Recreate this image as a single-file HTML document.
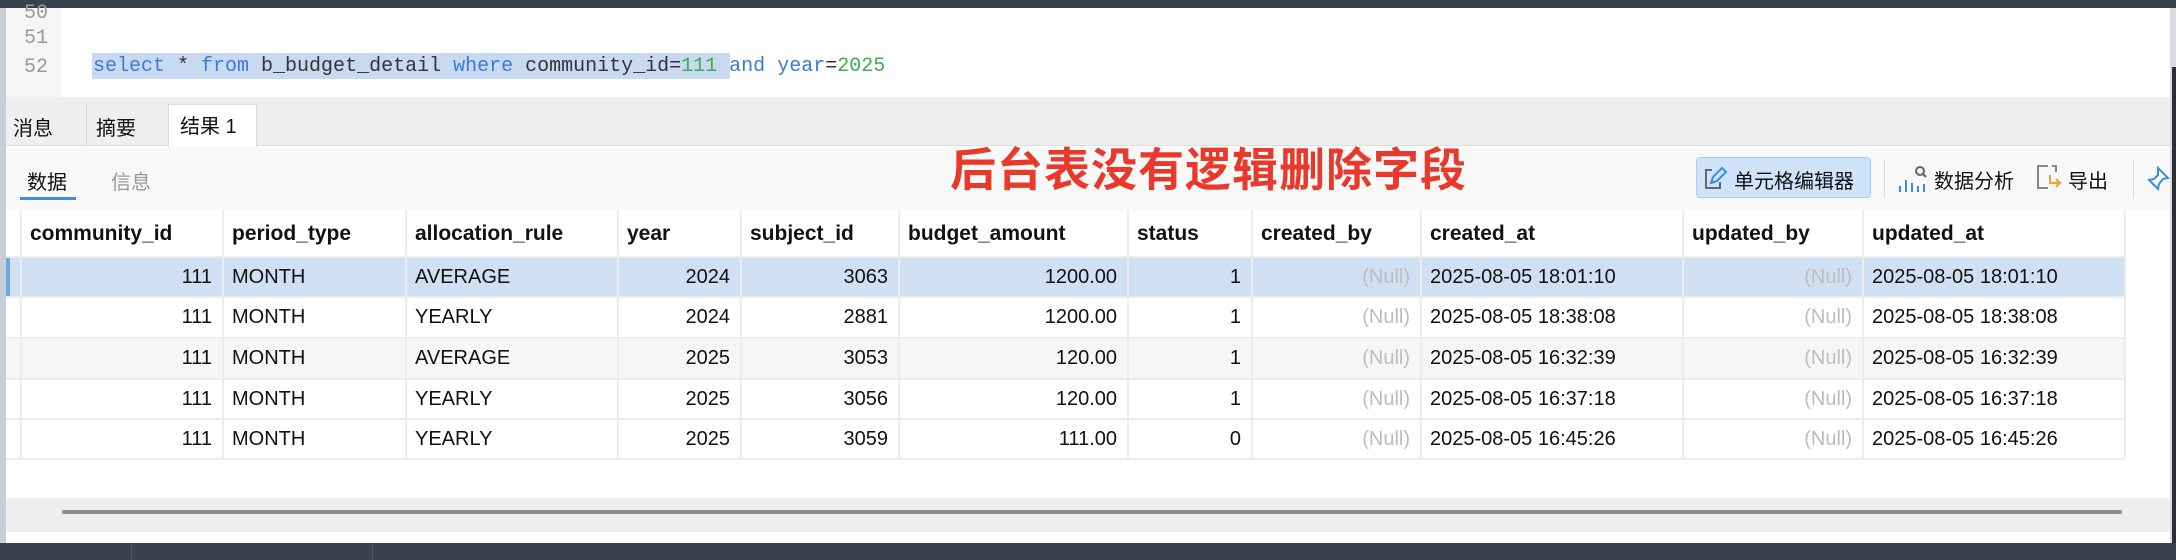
<!DOCTYPE html>
<html><head><meta charset="utf-8"><style>
*{margin:0;padding:0;box-sizing:border-box}
body{width:2176px;height:560px;overflow:hidden;background:#fff;position:relative;font-family:"Liberation Sans","Noto Sans CJK SC",sans-serif;color:#111}
.a{position:absolute}
.cell{position:absolute;font-size:20px;line-height:40px;white-space:nowrap;overflow:hidden;padding:0 10px}
.r{text-align:right}
.n{color:#bdbdbd}
.h{font-weight:bold;font-size:21px;line-height:47px}
</style></head><body>
<div class="a" style="left:0;top:0;width:2176px;height:8px;background:#3a404c"></div>
<div class="a" style="left:0;top:8px;width:6px;height:536px;background:#c9ced6"></div>
<div class="a" style="left:6px;top:8px;width:56px;height:89px;background:#f5f5f5"></div>
<div class="a" style="left:24px;top:2px;font:20px 'Liberation Mono',monospace;color:#999;line-height:24px">50</div>
<div class="a" style="left:24px;top:27px;font:20px 'Liberation Mono',monospace;color:#999;line-height:24px">51</div>
<div class="a" style="left:24px;top:56px;font:20px 'Liberation Mono',monospace;color:#999;line-height:24px">52</div>
<div class="a" style="left:92px;top:53px;width:638px;height:26px;background:#c8daf2"></div>
<div class="a" style="left:93px;top:55px;font:20px 'Liberation Mono',monospace;line-height:24px;white-space:pre;color:#333"><span style="color:#3a7bd5">select</span> * <span style="color:#3a7bd5">from</span> b_budget_detail <span style="color:#3a7bd5">where</span> community_id=<span style="color:#3dae49">111</span> <span style="color:#3a7bd5">and</span> <span style="color:#3a7bd5">year</span>=<span style="color:#3dae49">2025</span></div>
<div class="a" style="left:2170px;top:8px;width:6px;height:536px;background:#d9dce0"></div>
<div class="a" style="left:2172px;top:67px;width:4px;height:477px;background:#2b3038"></div>
<!-- tabs -->
<div class="a" style="left:6px;top:97px;width:2164px;height:49px;background:#efefef;border-bottom:1px solid #dcdcdc"></div>
<div class="a" style="left:86px;top:104px;width:1px;height:42px;background:#d8d8d8"></div>
<div class="a" style="left:168px;top:104px;width:89px;height:43px;background:#fff;border:1px solid #ddd;border-bottom:none"></div>
<div class="a" style="left:13px;top:112px;font-size:20px">消息</div>
<div class="a" style="left:96px;top:112px;font-size:20px">摘要</div>
<div class="a" style="left:180px;top:110px;font-size:20px">结果 1</div>
<!-- toolbar -->
<div class="a" style="left:6px;top:147px;width:2164px;height:63px;background:#f8f8f8"></div>
<div class="a" style="left:27px;top:166px;font-size:20px">数据</div>
<div class="a" style="left:111px;top:166px;font-size:20px;color:#999">信息</div>
<div class="a" style="left:20px;top:197px;width:56px;height:3px;background:#3b8de0"></div>
<div class="a" style="left:950px;top:134px;font-size:46px;font-weight:bold;color:#e8392a;letter-spacing:1px;text-shadow:0 0 3px #fff,0 0 3px #fff">后台表没有逻辑删除字段</div>
<div class="a" style="left:1696px;top:157px;width:175px;height:41px;background:#cfe4fb;border:1px solid #a9cdf5;border-radius:4px"></div>
<svg class="a" style="left:1702px;top:166px" width="26" height="26" viewBox="0 0 26 26"><path d="M10 4H4v18h14v-6" fill="none" stroke="#666" stroke-width="2"/><path d="M9 17l2-6 9-9 4 4-9 9z" fill="none" stroke="#3b8de0" stroke-width="2"/></svg>
<div class="a" style="left:1734px;top:165px;font-size:20px">单元格编辑器</div>
<div class="a" style="left:1884px;top:160px;width:1px;height:38px;background:#ddd"></div>
<svg class="a" style="left:1898px;top:164px" width="30" height="30" viewBox="0 0 30 30"><g fill="none" stroke="#3b8de0" stroke-width="2"><path d="M2 22v6M8 16v12M14 19v9M20 22v6M26 20v8"/></g><circle cx="22" cy="7" r="4" fill="none" stroke="#666" stroke-width="2"/><path d="M25 10l3 3" stroke="#666" stroke-width="2"/></svg>
<div class="a" style="left:1934px;top:165px;font-size:20px">数据分析</div>
<svg class="a" style="left:2034px;top:163px" width="30" height="30" viewBox="0 0 30 30"><path d="M14 3H4v22h10M18 3h4v6" fill="none" stroke="#888" stroke-width="2"/><path d="M16 12v8h10M22 16l4 4-4 4" fill="none" stroke="#f0a030" stroke-width="2"/></svg>
<div class="a" style="left:2068px;top:165px;font-size:20px">导出</div>
<div class="a" style="left:2133px;top:160px;width:1px;height:38px;background:#ddd"></div>
<svg class="a" style="left:2146px;top:166px" width="24" height="26" viewBox="0 0 24 26"><path d="M12 2l10 10-5 1-4 5-1 5-9-9 5-1 4-4z" fill="none" stroke="#3b8de0" stroke-width="2"/></svg>
<!-- table -->
<div class="a" style="left:6px;top:210px;width:2118px;height:249px;background:#fff"></div>
<div class="a" style="left:6px;top:257px;width:2118px;height:40px;background:#cfe0f3"></div>
<div class="a" style="left:6px;top:257px;width:4px;height:40px;background:#6ea3df"></div>
<div class="a" style="left:6px;top:338px;width:2118px;height:41px;background:#f6f6f6"></div>
<div id="t"></div>
<!-- bottom -->
<div class="a" style="left:6px;top:498px;width:2164px;height:34px;background:#efefef"></div>
<div class="a" style="left:62px;top:510px;width:2060px;height:4px;background:#8a8a8a;border-radius:2px"></div>
<div class="a" style="left:0;top:543px;width:2176px;height:17px;background:#3a404c"></div>
<div class="a" style="left:131px;top:544px;width:1px;height:16px;background:#555"></div>
<div class="a" style="left:372px;top:544px;width:1px;height:16px;background:#555"></div>
<script>
var c=[20,222,405,617,740,898,1127,1251,1420,1682,1862,2124];
var hd=["community_id","period_type","allocation_rule","year","subject_id","budget_amount","status","created_by","created_at","updated_by","updated_at"];
var al=[1,0,0,1,1,1,1,1,0,1,0];
var d=[["111","MONTH","AVERAGE","2024","3063","1200.00","1","(Null)","2025-08-05 18:01:10","(Null)","2025-08-05 18:01:10"],
["111","MONTH","YEARLY","2024","2881","1200.00","1","(Null)","2025-08-05 18:38:08","(Null)","2025-08-05 18:38:08"],
["111","MONTH","AVERAGE","2025","3053","120.00","1","(Null)","2025-08-05 16:32:39","(Null)","2025-08-05 16:32:39"],
["111","MONTH","YEARLY","2025","3056","120.00","1","(Null)","2025-08-05 16:37:18","(Null)","2025-08-05 16:37:18"],
["111","MONTH","YEARLY","2025","3059","111.00","0","(Null)","2025-08-05 16:45:26","(Null)","2025-08-05 16:45:26"]];
var ry=[257,297,338,379,419,459],h="";
for(var i=0;i<c.length;i++)h+='<div class="a" style="left:'+c[i]+'px;top:210px;width:2px;height:249px;background:#ececec"></div>';
for(var j=0;j<ry.length;j++)h+='<div class="a" style="left:6px;top:'+(ry[j]-1)+'px;width:2118px;height:2px;background:#ececec"></div>';
for(var i=0;i<11;i++){h+='<div class="cell h" style="left:'+c[i]+'px;top:210px;width:'+(c[i+1]-c[i])+'px">'+hd[i]+'</div>';
for(var j=0;j<5;j++){var v=d[j][i];h+='<div class="cell'+(al[i]?' r':'')+(v=="(Null)"?' n':'')+'" style="left:'+c[i]+'px;top:'+ry[j]+'px;width:'+(c[i+1]-c[i])+'px">'+v+'</div>';}}
document.getElementById('t').innerHTML=h;
</script>
</body></html>
